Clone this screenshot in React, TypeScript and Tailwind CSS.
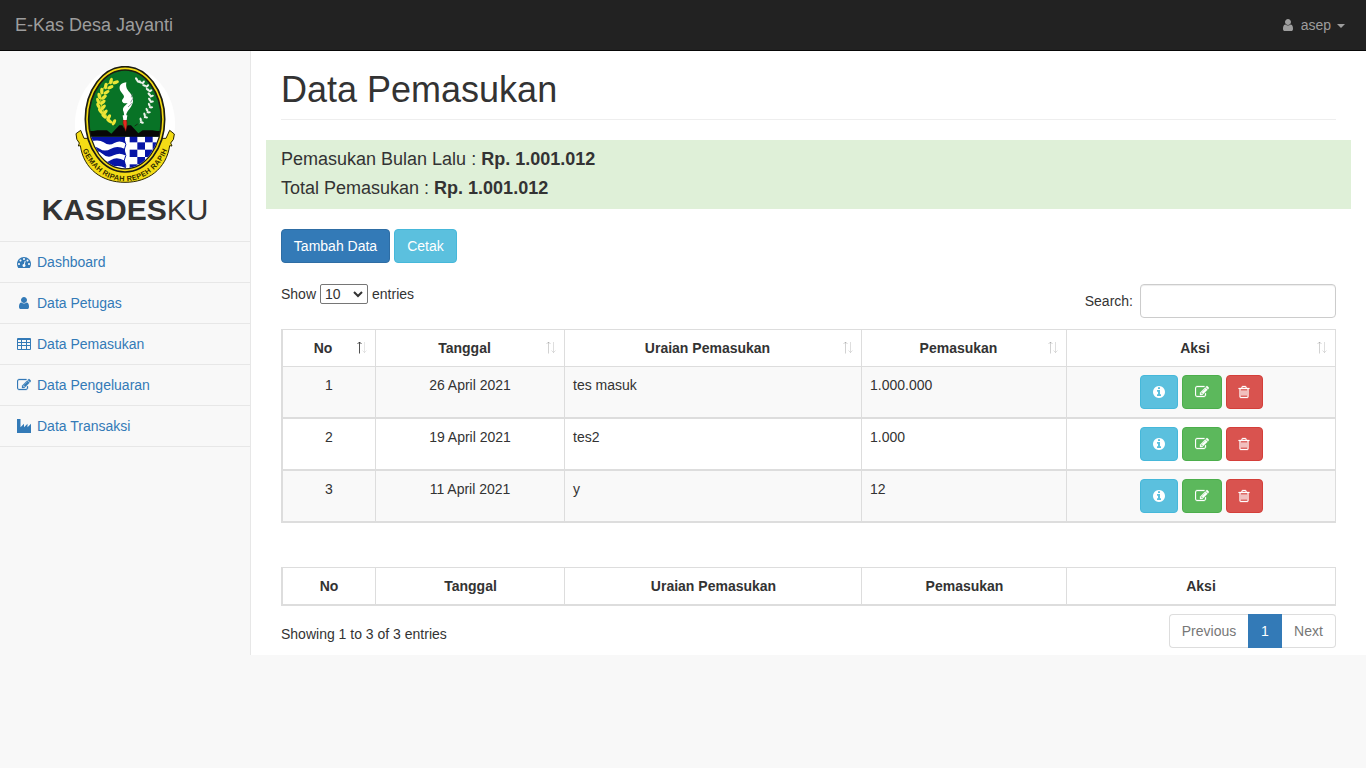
import React from "react";

const ICONS = {
  user: "M1536 1399q0 109-62.5 187t-150.5 78h-854q-88 0-150.5-78t-62.5-187q0-85 8.5-160.5t31.5-152 58.5-131 94-89 134.5-34.5q131 128 313 128t313-128q76 0 134.5 34.5t94 89 58.5 131 31.5 152 8.5 160.5zm-256-887q0 159-112.5 271.5t-271.5 112.5-271.5-112.5-112.5-271.5 112.5-271.5 271.5-112.5 271.5 112.5 112.5 271.5z",
  dashboard:
    "M384 1152q0-53-37.5-90.5t-90.5-37.5-90.5 37.5-37.5 90.5 37.5 90.5 90.5 37.5 90.5-37.5 37.5-90.5zm192-448q0-53-37.5-90.5t-90.5-37.5-90.5 37.5-37.5 90.5 37.5 90.5 90.5 37.5 90.5-37.5 37.5-90.5zm428 481l101-382q6-26-7.5-48.5t-38.5-29.5-48 6.5-30 39.5l-101 382q-60 5-107 43.5t-63 98.5q-20 77 20 146t117 89 146-20 89-117q16-60-6-117t-72-91zm660-33q0-53-37.5-90.5t-90.5-37.5-90.5 37.5-37.5 90.5 37.5 90.5 90.5 37.5 90.5-37.5 37.5-90.5zm-640-640q0-53-37.5-90.5t-90.5-37.5-90.5 37.5-37.5 90.5 37.5 90.5 90.5 37.5 90.5-37.5 37.5-90.5zm448 192q0-53-37.5-90.5t-90.5-37.5-90.5 37.5-37.5 90.5 37.5 90.5 90.5 37.5 90.5-37.5 37.5-90.5zm320 448q0 261-141 483-19 29-54 29h-1402q-35 0-54-29-141-221-141-483 0-182 71-348t191-286 286-191 348-71 348 71 286 191 191 286 71 348z",
  table:
    "M128 128h1536q128 0 128 128v1280q0 128-128 128h-1536q-128 0-128-128v-1280q0-128 128-128zM128 384v256h384v-256zM640 384v256h512v-256zM1280 384v256h384v-256zM128 768v256h384v-256zM640 768v256h512v-256zM1280 768v256h384v-256zM128 1152v384h384v-384zM640 1152v384h512v-384zM1280 1152v384h384v-384z",
  edit: "M888 1184l116-116-152-152-116 116v56h96v96h56zm440-720q-16-16-33 1l-350 350q-17 17-1 33t33-1l350-350q17-17 1-33zm80 594v190q0 119-84.5 203.5t-203.5 84.5h-832q-119 0-203.5-84.5t-84.5-203.5v-832q0-119 84.5-203.5t203.5-84.5h832q63 0 117 25 15 7 18 23 3 17-9 29l-49 49q-14 14-32 8-23-6-45-6h-832q-66 0-113 47t-47 113v832q0 66 47 113t113 47h832q66 0 113-47t47-113v-126q0-13 9-22l64-64q15-15 35-7t20 29zm-96-738l288 288-672 672h-288v-288zm444 132l-92 92-288-288 92-92q28-28 68-28t68 28l152 152q28 28 28 68t-28 68z",
  industry: "M0 0h448v1056l448-440v440l448-440v440l448-440v1176H0z",
  info: "M1152 1376v-160q0-14-9-23t-23-9h-96v-512q0-14-9-23t-23-9h-320q-14 0-23 9t-9 23v160q0 14 9 23t23 9h96v320h-96q-14 0-23 9t-9 23v160q0 14 9 23t23 9h448q14 0 23-9t9-23zm-128-896v-160q0-14-9-23t-23-9h-192q-14 0-23 9t-9 23v160q0 14 9 23t23 9h192q14 0 23-9t9-23zm640 416q0 209-103 385.5t-279.5 279.5-385.5 103-385.5-103-279.5-279.5-103-385.5 103-385.5 279.5-279.5 385.5-103 385.5 103 279.5 279.5 103 385.5z",
  trash:
    "M704 736v576q0 14-9 23t-23 9h-64q-14 0-23-9t-9-23v-576q0-14 9-23t23-9h64q14 0 23 9t9 23zm256 0v576q0 14-9 23t-23 9h-64q-14 0-23-9t-9-23v-576q0-14 9-23t23-9h64q14 0 23 9t9 23zm256 0v576q0 14-9 23t-23 9h-64q-14 0-23-9t-9-23v-576q0-14 9-23t23-9h64q14 0 23 9t9 23zm128 724v-948h-896v948q0 22 7 40.5t14.5 27 10.5 8.5h832q3 0 10.5-8.5t14.5-27 7-40.5zm-672-1076h448l-48-117q-7-9-17-11h-317q-10 2-17 11zm928 32v64q0 14-9 23t-23 9h-96v948q0 83-47 143.5t-113 60.5h-832q-66 0-113-58.5t-47-141.5v-952h-96q-14 0-23-9t-9-23v-64q0-14 9-23t23-9h309l70-167q15-37 54-63t79-26h320q40 0 79 26t54 63l70 167h309q14 0 23 9t9 23z",
};

type IconName = keyof typeof ICONS;

function Icon({ name }: { name: IconName }) {
  const thin = name === "edit" || name === "trash";
  return (
    <svg
      className="h-3.5 w-3.5 shrink-0"
      viewBox="0 0 1792 1792"
      fill="currentColor"
      stroke={thin ? "currentColor" : "none"}
      strokeWidth={35}
      fillRule={name === "table" ? "evenodd" : "nonzero"}
    >
      <path d={ICONS[name]} />
    </svg>
  );
}

const leaves = [0, 1, 2, 3, 4, 5, 6, 7, 8];

function Emblem() {
  return (
    <svg className="h-[117px] w-[100px]" viewBox="45 33 300 351">
      <defs>
        <clipPath id="field">
          <ellipse cx="195" cy="193" rx="108" ry="147" />
        </clipPath>
        <path id="motto" d="M64 276A143 171 0 0 0 326 276" />
      </defs>
      <ellipse cx="195" cy="208.500" rx="150" ry="175.500" fill="#fff" />
      <path
        d="M62 226L48 236Q48 256 58 264L55 273L61 272C71 342 126 382 195 382S319 342 329 272L336 273L332 264Q343 256 343 237L329 226L318 250H72Z"
        fill="#f4dc16"
        stroke="#292500"
        strokeWidth="3"
      />
      <ellipse cx="195" cy="193" rx="119" ry="158" fill="#f4dc16" stroke="#1d1d10" strokeWidth="5" />
      <ellipse cx="195" cy="193" rx="109" ry="148" fill="#087326" stroke="#1d1d10" strokeWidth="5" />
      <g clipPath="url(#field)">
        <path d="M80 245H195V360H80Z" fill="#fff" />
        <path
          d="M80 245H195V265Q179 254 163 264T131 262T80 263ZM80 279Q104 270 119 281T153 281T195 282V301Q179 291 161 301T127 296T80 298ZM80 319Q102 309 119 318T153 315T195 317V338Q175 328 155 337T80 335Z"
          fill="#0715a6"
        />
        <path d="M195 245H310V360H195Z" fill="#fff" />
        {[0, 1, 2, 3, 4].map((r) =>
          [0, 1, 2, 3, 4].map((c) =>
            (r + c) % 2 === 0 ? (
              <rect key={`${r}-${c}`} x={209 + c * 23} y={240 + r * 22} width="23" height="22" fill="#0715a6" />
            ) : null,
          ),
        )}
        <path d="M195 245q-5 8 0 16t0 16t0 16t0 16t0 16t0 16" fill="none" stroke="#0715a6" strokeWidth="3" />
        <path d="M80 245V228H100L112 226H141L154 236L178 211H187L191 218H199L203 211H213L235 235L248 226H277L291 228H310V245Z" fill="#080807" />
      </g>
      <path d="M191 211C187 201 190 196 192 191H198C202 200 202 210 197 229Z" fill="#e32a20" stroke="#6b130d" strokeWidth="1.500" />
      <path d="M188 181H202L200 195H190Z" fill="#fff" />
      <path
        d="M199 82C177 84 176 99 182 109C187 118 197 123 189 131C182 137 188 148 203 144C196 153 184 157 191 171L193 184H199C198 171 206 166 213 155C223 141 220 126 211 115C203 105 196 99 199 82Z"
        fill="#fff"
      />
      <path d="M218 116L214 127M219 130L212 142M216 145L204 156" stroke="#57666a" strokeWidth="2" />
      <path d="M160 80C113 91 106 155 157 204" fill="none" stroke="#b5c51f" strokeWidth="4" />
      <path d="M232 80C281 96 284 163 237 207" fill="none" stroke="#628e66" strokeWidth="1.500" />
      <path d="M155 204L166 211M233 207L224 213" stroke="#142f15" strokeWidth="3" />
      {leaves.map((i) => {
        const t = i / 8;
        const lx = 160 - 142 * t * (1 - t) * (1 - t) - 162 * t * t * (1 - t) - 5 * t * t * t;
        const y = 78 + 120 * t;
        return (
          <g key={i}>
            <ellipse cx={lx - 7} cy={y} rx="5" ry="10" transform={`rotate(${15 - 70 * t} ${lx - 7} ${y})`} fill="#ece637" />
            <ellipse cx={lx + 7} cy={y + 4} rx="5" ry="10" transform={`rotate(${70 - 45 * t} ${lx + 7} ${y + 4})`} fill="#ece637" />
          </g>
        );
      })}
      {[
        [231, 78, 20],
        [245, 85, -20],
        [257, 95, -15],
        [266, 108, 0],
        [270, 123, 10],
        [270, 139, 20],
        [268, 155, 30],
        [261, 170, 30],
        [253, 184, 40],
        [241, 199, 45],
      ].map(([x, y, a], i) => (
        <g key={i} transform={`translate(${x} ${y}) rotate(${a})`} fill="#eef3ec">
          <ellipse cx="-5" cy="-2" rx="6.500" ry="3.300" transform="rotate(35)" />
          <ellipse cx="5" cy="2" rx="6.500" ry="3.300" transform="rotate(-30)" />
        </g>
      ))}
      <text fill="#342d00" fontFamily="Liberation Sans, sans-serif" fontWeight="700" fontSize="22" letterSpacing="1">
        <textPath href="#motto" startOffset="50%" textAnchor="middle">
          GEMAH RIPAH REPEH RAPIH
        </textPath>
      </text>
    </svg>
  );
}

const menu: { icon: IconName; label: string }[] = [
  { icon: "dashboard", label: "Dashboard" },
  { icon: "user", label: "Data Petugas" },
  { icon: "table", label: "Data Pemasukan" },
  { icon: "edit", label: "Data Pengeluaran" },
  { icon: "industry", label: "Data Transaksi" },
];

const columns = ["No", "Tanggal", "Uraian Pemasukan", "Pemasukan", "Aksi"];

const rows = [
  { no: 1, date: "26 April 2021", text: "tes masuk", amount: "1.000.000" },
  { no: 2, date: "19 April 2021", text: "tes2", amount: "1.000" },
  { no: 3, date: "11 April 2021", text: "y", amount: "12" },
];

function SortArrows({ active }: { active: boolean }) {
  return (
    <svg className="absolute top-[11px] right-2 h-3.5 w-3" viewBox="0 0 12 14" fill="none" stroke="#333">
      <path d="M4.500 12.500V1M2.500 3L4.500 1L6.500 3" opacity={active ? 0.85 : 0.22} />
      <path d="M9.500 1V11.500M7.500 9.500L9.500 11.500L11.500 9.500" opacity={active ? 0.12 : 0.16} />
    </svg>
  );
}

function Columns() {
  return (
    <colgroup>
      <col className="w-[95px]" />
      <col className="w-[189px]" />
      <col className="w-[297px]" />
      <col className="w-[205px]" />
      <col className="w-[269px]" />
    </colgroup>
  );
}

const td = "h-[52px] border-r border-b-2 border-[#ddd] px-2 pt-2 align-top first:border-l-2";

export default function App() {
  return (
    <div className="min-h-screen bg-[#f8f8f8] font-['Liberation_Sans',Arial,sans-serif] text-sm leading-5 text-[#333]">
      <header className="flex h-[51px] items-center justify-between border-b border-[#080808] bg-[#222] pr-[21px] pl-[15px] text-[#9d9d9d]">
        <span className="text-lg leading-5">E-Kas Desa Jayanti</span>
        <div className="flex items-center">
          <Icon name="user" />
          <span className="ml-1.5">asep</span>
          <span className="mt-px ml-[6px] border-x-4 border-t-4 border-x-transparent border-t-[#9d9d9d]" />
        </div>
      </header>

      <div className="flex items-start">
        <aside className="w-[250px] shrink-0">
          <div className="flex h-[191px] flex-col items-center border-b border-[#e7e7e7] pt-[15px]">
            <Emblem />
            <div className="mt-[10px] text-[30px] leading-[33px]">
              <b>KASDES</b>KU
            </div>
          </div>
          <nav>
            {menu.map((m) => (
              <a key={m.label} href="#" className="flex h-[41px] items-center gap-1.5 border-b border-[#e7e7e7] pl-[17px] text-[#337ab7]">
                <Icon name={m.icon} />
                {m.label}
              </a>
            ))}
          </nav>
        </aside>

        <main className="h-[604px] grow border-l border-[#e7e7e7] bg-white px-[30px]">
          <h1 className="h-[69px] border-b border-[#eee] pt-[19px] text-4xl leading-10">Data Pemasukan</h1>

          <section className="-mx-[15px] mt-5 h-[69px] bg-[#dff0d8] px-[15px] pt-[9px] text-lg leading-5">
            <p>
              Pemasukan Bulan Lalu : <b>Rp. 1.001.012</b>
            </p>
            <p className="mt-[9px]">
              Total Pemasukan : <b>Rp. 1.001.012</b>
            </p>
          </section>

          <div className="mt-5 flex gap-1 text-white">
            <button className="h-[34px] w-[109px] rounded border border-[#2e6da4] bg-[#337ab7]">Tambah Data</button>
            <button className="h-[34px] w-[63px] rounded border border-[#46b8da] bg-[#5bc0de]">Cetak</button>
          </div>

          <div className="mt-[21px] flex h-[45px] items-start justify-between">
            <label className="flex items-center gap-1">
              Show
              <span className="flex h-5 w-12 items-center justify-between rounded-[2px] border border-[#767676] bg-white pr-1 pl-1">
                10
                <svg className="h-2 w-2.5" viewBox="0 0 10 8" fill="none" stroke="#333" strokeWidth="2">
                  <path d="M1 2L5 6L9 2" />
                </svg>
              </span>
              entries
            </label>
            <label className="flex items-center">
              Search:
              <input className="ml-[7px] h-[34px] w-[196px] rounded border border-[#ccc] bg-white px-2 shadow-[inset_0_1px_1px_rgba(0,0,0,0.075)]" />
            </label>
          </div>

          <table className="w-[1055px] table-fixed border-separate border-spacing-0">
            <Columns />
            <thead>
              <tr>
                {columns.map((c, i) => (
                  <th
                    key={c}
                    className="relative h-[38px] border-y border-r border-[#ddd] pr-5 pl-[9px] text-center font-bold first:border-l-2 first:pl-2 last:pl-2"
                  >
                    {c}
                    <SortArrows active={i === 0} />
                  </th>
                ))}
              </tr>
            </thead>
            <tbody>
              {rows.map((r) => (
                <tr key={r.no} className="odd:bg-[#f9f9f9]">
                  <td className={`${td} text-center`}>{r.no}</td>
                  <td className={`${td} text-center`}>{r.date}</td>
                  <td className={td}>{r.text}</td>
                  <td className={td}>{r.amount}</td>
                  <td className={td}>
                    <div className="flex justify-center gap-1 pl-px text-white">
                      <button className="flex h-[34px] w-[38px] items-center justify-center rounded border border-[#46b8da] bg-[#5bc0de]">
                        <Icon name="info" />
                      </button>
                      <button className="flex h-[34px] w-10 items-center justify-center rounded border border-[#4cae4c] bg-[#5cb85c]">
                        <Icon name="edit" />
                      </button>
                      <button className="flex h-[34px] w-[37px] items-center justify-center rounded border border-[#d43f3a] bg-[#d9534f] pr-px">
                        <Icon name="trash" />
                      </button>
                    </div>
                  </td>
                </tr>
              ))}
            </tbody>
          </table>

          <table className="mt-11 w-[1055px] table-fixed border-separate border-spacing-0">
            <Columns />
            <tfoot>
              <tr>
                {columns.map((c) => (
                  <th
                    key={c}
                    className="h-[39px] border-t border-r border-b-2 border-[#ddd] pl-px text-center font-bold first:border-l-2 first:pl-0 last:pl-0"
                  >
                    {c}
                  </th>
                ))}
              </tr>
            </tfoot>
          </table>

          <div className="mt-2 flex justify-between">
            <p className="pt-2.5">Showing 1 to 3 of 3 entries</p>
            <div className="flex h-[34px] text-[#777]">
              <span className="flex w-[79px] items-center justify-center rounded-l border border-r-0 border-[#ddd]">Previous</span>
              <span className="flex w-[34px] items-center justify-center bg-[#337ab7] text-white">1</span>
              <span className="flex w-[54px] items-center justify-center rounded-r border border-l-0 border-[#ddd]">Next</span>
            </div>
          </div>
        </main>
      </div>
    </div>
  );
}
